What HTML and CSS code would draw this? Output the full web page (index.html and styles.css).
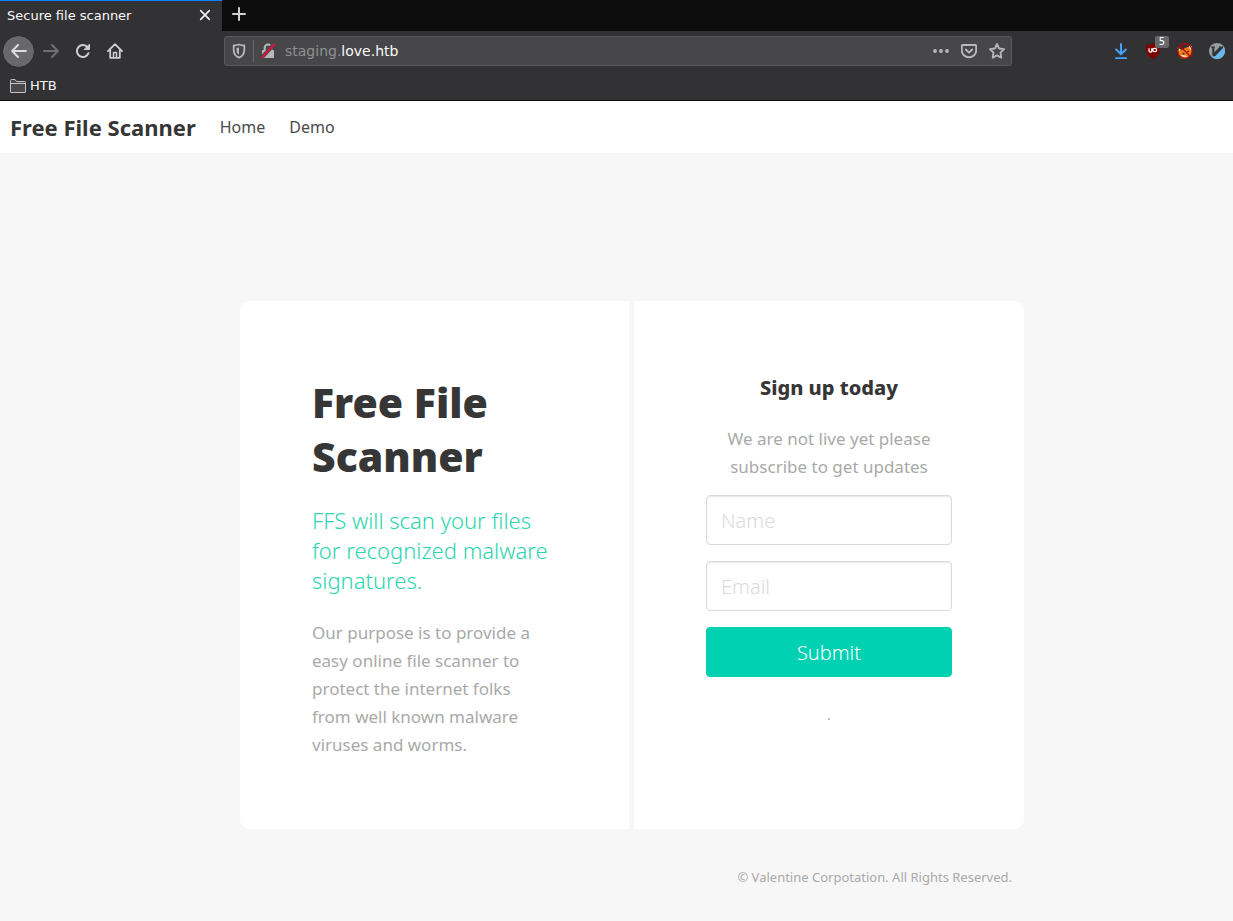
FILE: index.html
```html
<!DOCTYPE html>
<html lang="en">
<head>
<meta charset="utf-8">
<title>Secure file scanner</title>
<link rel="stylesheet" href="styles.css">
</head>
<body>
<header class="browser">
  <div class="tabs">
    <div class="tab">
      <span class="tab-title">Secure file scanner</span>
      <button class="icon-btn tab-close" aria-label="Close tab"><svg width="16" height="16" viewBox="0 0 16 16" fill="none" stroke="#f0f0f0" stroke-width="1.7" stroke-linecap="round"><path d="M3.7 3.7l8.6 8.6M12.3 3.7l-8.6 8.6"/></svg></button>
    </div>
    <button class="icon-btn tab-new" aria-label="New tab"><svg width="16" height="16" viewBox="0 0 16 16" fill="none" stroke="#d0d0d0" stroke-width="2" stroke-linecap="round"><path d="M8 2v12M2 8h12"/></svg></button>
  </div>
  <div class="toolbar">
    <div class="nav-buttons">
      <button class="icon-btn back" aria-label="Back"><svg width="16" height="16" viewBox="0 0 16 16" fill="none" stroke="#dcdcdc" stroke-width="2" stroke-linecap="round" stroke-linejoin="round"><path d="M15 8H1.5M7 2L1.2 8 7 14"/></svg></button>
      <button class="icon-btn" aria-label="Forward"><svg width="16" height="16" viewBox="0 0 16 16" fill="none" stroke="#6f6f71" stroke-width="2" stroke-linecap="round" stroke-linejoin="round"><path d="M1 8h13.500M9 2l5.800 6L9 14"/></svg></button>
      <button class="icon-btn" aria-label="Reload"><svg width="16" height="16" viewBox="0 0 16 16" fill="none" stroke="#cfcfcf" stroke-width="2" stroke-linecap="round" stroke-linejoin="round"><path d="M13.500 10.200A6 6 0 1 1 12.600 4.300"/><path d="M14.500 1.500v5H9.500z" fill="#cfcfcf" stroke-width="1"/></svg></button>
      <button class="icon-btn" aria-label="Home"><svg width="16" height="16" viewBox="0 0 16 16" fill="none" stroke="#cfcfcf" stroke-width="1.800" stroke-linejoin="round" stroke-linecap="round"><path d="M1 8.200L8 1.200l7 7M3.200 7v7.800h9.600V7"/><path d="M6.500 14V9.500h3V14" stroke-width="1.500"/></svg></button>
    </div>
    <div class="url-bar">
      <svg class="shield" width="16" height="16" viewBox="0 0 16 16" fill="none" stroke="#b8b8ba" stroke-width="1.800" stroke-linejoin="round"><path d="M8 1.500c2 .8 3.800 1 5.300 1v4.500c0 4-2.300 6.500-5.300 7.700-3-1.200-5.300-3.700-5.300-7.700V2.500c1.500 0 3.300-.2 5.300-1z"/><path d="M8 4.600c-.8.3-1.700.4-2.500.5v2.200c0 2 .8 3.500 2.500 4.500z" fill="#b8b8ba" stroke="none"/></svg>
      <span class="url-rule"></span>
      <svg width="16" height="16" viewBox="0 0 16 16"><rect x="2" y="7" width="12" height="8" rx="1" fill="#b8b8ba"/><path d="M4.700 8V4.800a3.300 3.300 0 0 1 6.600 0V8" fill="none" stroke="#b8b8ba" stroke-width="2"/><path d="M1.800 14.500L14 1.300" stroke="#48484a" stroke-width="4"/><path d="M1.800 14.500L14.300 1.300" stroke="#f5083a" stroke-width="1.800" stroke-linecap="round"/></svg>
      <span class="url-text">staging.<b>love.htb</b></span>
      <span class="url-actions">
        <svg width="16" height="16" viewBox="0 0 16 16" fill="#b8b8ba"><circle cx="2" cy="8" r="1.900"/><circle cx="8" cy="8" r="1.900"/><circle cx="14" cy="8" r="1.900"/></svg>
        <svg width="16" height="16" viewBox="0 0 16 16" fill="none" stroke="#b8b8ba" stroke-width="1.900" stroke-linecap="round" stroke-linejoin="round"><path d="M1.800 2h12.400a1 1 0 0 1 1 1v4.500a7.200 6.800 0 0 1-14.400 0V3a1 1 0 0 1 1-1z"/><path d="M4.800 6.500L8 9.600l3.200-3.100"/></svg>
        <svg width="16" height="16" viewBox="0 0 16 16" fill="none" stroke="#b8b8ba" stroke-width="1.800" stroke-linejoin="round"><path d="M8 1l2.100 4.500 5 .7-3.600 3.500.8 5L8 12.400l-4.300 2.300.8-5L.9 6.200l5-.7z"/></svg>
      </span>
    </div>
    <div class="extensions">
      <button class="icon-btn" aria-label="Downloads"><svg width="16" height="16" viewBox="0 0 16 16" fill="none" stroke="#45a1ff" stroke-width="2" stroke-linecap="round" stroke-linejoin="round"><path d="M8 1v9.500M3.200 6.500L8 11.300l4.800-4.800M3 15.200h10"/></svg></button>
      <button class="icon-btn ublock" aria-label="uBlock, 5 blocked"><svg width="16" height="16" viewBox="0 0 16 16"><path d="M8 0c2 1.500 4.500 2 7 2 0 6 .2 10-7 14C.8 12 1 8 1 2c2.500 0 5-.5 7-2z" fill="#800000"/><path d="M4 5.200v2.500a1.300 1.300 0 0 0 2.800 0V5.200M9.300 5.400h.8a1.500 1.600 0 0 1 0 3.200h-.8a1.500 1.600 0 0 1 0-3.200z" fill="none" stroke="#fff" stroke-width="1.300"/></svg><span class="count">5</span></button>
      <button class="icon-btn" aria-label="Proxy disabled"><svg width="16" height="16" viewBox="0 0 16 16"><path d="M1 5l4 2 3-2 4-1.500 2-1 .8 5.500-1.300 4.500-4 2.500-5 .5-2.500-3-.5-3z" fill="#e8801c"/><path d="M.5 4.500l3 2-1.500 2zM12 2l3 1.500-.5 4-2-2zM3.500 12l3 2 4-.5-2-1z" fill="#f2e9df"/><path d="M5.500 10.500l2 .5M10 9l2-1" stroke="#5b2911" stroke-width="1.300"/><circle cx="8" cy="8" r="7.300" fill="none" stroke="#c50000" stroke-width="1.200"/><path d="M3 3l10 10" stroke="#c50000" stroke-width="1.300"/></svg></button>
      <button class="icon-btn" aria-label="Vimium"><svg width="16" height="16" viewBox="0 0 16 16"><circle cx="8" cy="8" r="8" fill="#959da0"/><path d="M14.800 3.800A8 8 0 0 1 3.200 14.400z" fill="#68b7e9"/><path d="M2.200 3.500h3.600v1.200l-.5.4v4.500l5-5.300-.5-.8h4.200v1.600L6 13.300H4.200L3.300 12V5.200l-1.100-.5z" fill="#303336"/></svg></button>
    </div>
  </div>
  <div class="bookmarks">
    <svg width="16" height="16" viewBox="0 0 16 16" fill="#49494b" stroke="#c4c4c4" stroke-width="1" stroke-linejoin="round"><path d="M.5 14V2.500a1 1 0 0 1 1-1H5l1.500 2h8a1 1 0 0 1 1 1V14a.5.500 0 0 1-.5.500H1a.5.500 0 0 1-.5-.5zM.5 5.500h15"/></svg>
    <span>HTB</span>
  </div>
</header>
<nav class="navbar">
  <a class="brand" href="#">Free File Scanner</a>
  <a href="#">Home</a>
  <a href="#">Demo</a>
</nav>
<main class="hero">
  <div class="container">
    <div class="columns">
      <section class="column intro">
        <h1>Free File Scanner</h1>
        <h2>FFS will scan your files for recognized malware signatures.</h2>
        <p>Our purpose is to provide a easy online file scanner to protect the internet folks from well known malware viruses and worms.</p>
      </section>
      <section class="column signup">
        <h3>Sign up today</h3>
        <p>We are not live yet please subscribe to get updates</p>
        <form>
          <input type="text" placeholder="Name" aria-label="Name">
          <input type="email" placeholder="Email" aria-label="Email">
          <button type="button" class="submit">Submit</button>
        </form>
        <small>.</small>
      </section>
    </div>
    <footer>© Valentine Corpotation. All Rights Reserved.</footer>
  </div>
</main>
</body>
</html>
```
FILE: styles.css
```css
* { box-sizing: border-box; }
body {
  margin: 0;
  min-height: 100vh;
  display: flex;
  flex-direction: column;
  background: #f7f7f7;
  color: #363636;
  font-family: "Noto Sans", sans-serif;
  font-size: 16px;
}
h1, h2, h3, p { margin: 0; }
svg { display: block; flex: none; }
input, button { font-family: inherit; }

/* Browser frame */
.browser {
  background: #323234;
  border-bottom: 1px solid #0c0c0d;
  color: #f9f9fa;
  font-family: "DejaVu Sans", sans-serif;
  font-size: 13px;
}
.icon-btn {
  display: flex;
  align-items: center;
  justify-content: center;
  width: 32px;
  height: 32px;
  padding: 0;
  border: 0;
  background: none;
}
.tabs { display: flex; height: 31px; background: #0c0c0d; }
.tab {
  display: flex;
  align-items: center;
  justify-content: space-between;
  width: 222px;
  padding: 0 9px 2px 7px;
  border-top: 1px solid #0a84ff;
  background: #323234;
}
.tab-close { width: 16px; height: 16px; }
.tab-new { width: 34px; height: 28px; }
.toolbar { display: flex; align-items: center; height: 40px; padding-left: 2px; }
.nav-buttons { display: flex; width: 222px; }
.nav-buttons .icon-btn { width: 32px; }
.nav-buttons .back { width: 33px; height: 33px; border: 1px solid #28282a; border-radius: 50%; background: #68686a; }
.url-bar {
  display: flex;
  flex: 1;
  align-items: center;
  height: 30px;
  padding: 0 6px;
  border: 1px solid #59595b;
  border-radius: 3px;
  background: #474749;
  font-size: 14px;
}
.url-rule { width: 1px; height: 22px; margin: 0 6px; background: #68686a; }
.url-text { flex: 1; margin-left: 9px; color: #909092; }
.url-text b { font-weight: 400; color: #f9f9fa; }
.url-actions { display: flex; gap: 12px; }
.extensions { display: flex; margin-left: 93px; }
.ublock { position: relative; }
.count {
  position: absolute;
  top: 1px;
  right: 0;
  width: 14px;
  border-radius: 2px;
  background: #68686a;
  color: #fff;
  font-size: 10px;
  line-height: 12px;
}
.bookmarks { display: flex; align-items: center; gap: 4px; height: 29px; padding: 0 10px; }

/* Site navigation */
.navbar {
  display: flex;
  align-items: center;
  gap: 24px;
  height: 52px;
  padding: 0 10px;
  background: #fff;
}
.navbar a { color: #4a4a4a; text-decoration: none; }
.navbar .brand { color: #363636; font-size: 22px; font-weight: 700; }

/* Sign-up card */
.hero { flex: 1; padding: 148px 16px 32px 47px; }
.container { max-width: 784px; margin: 0 auto; }
.columns {
  display: grid;
  grid-template-columns: 389fr 390fr;
  gap: 5px;
  border-radius: 10px;
  overflow: hidden;
}
.column { padding: 72px 72px 70px; background: #fff; }
.column p { color: #a9a9a9; font-size: 17px; line-height: 28px; }
.intro p { max-width: 236px; }
h1 { padding-top: 2px; font-size: 41px; font-weight: 900; line-height: 54px; }
h2 { margin: 22px 0 24px; color: #2bd6ae; font-size: 22px; font-weight: 300; line-height: 30px; }
.signup { text-align: center; }
h3 { margin-bottom: 22px; font-size: 20px; font-weight: 800; line-height: 30px; }
form { display: grid; gap: 16px; margin: 14px 0 28px; }
input, .submit {
  width: 100%;
  height: 50px;
  padding: 0 14px;
  border: 1px solid #dbdbdb;
  border-radius: 4px;
  font-size: 20px;
  font-weight: 300;
}
input { background: #fff; box-shadow: inset 0 1px 2px rgba(10, 10, 10, 0.1); color: #363636; }
input::placeholder { color: #dbdbdb; opacity: 1; }
.submit { border-color: #00d1b2; background: #00d1b2; color: #fff; }
small { display: block; color: #a9a9a9; font-size: 14px; line-height: 20px; }
footer { padding: 38px 12px 0; color: #a9a9a9; font-size: 13px; line-height: 20px; text-align: right; }
```
